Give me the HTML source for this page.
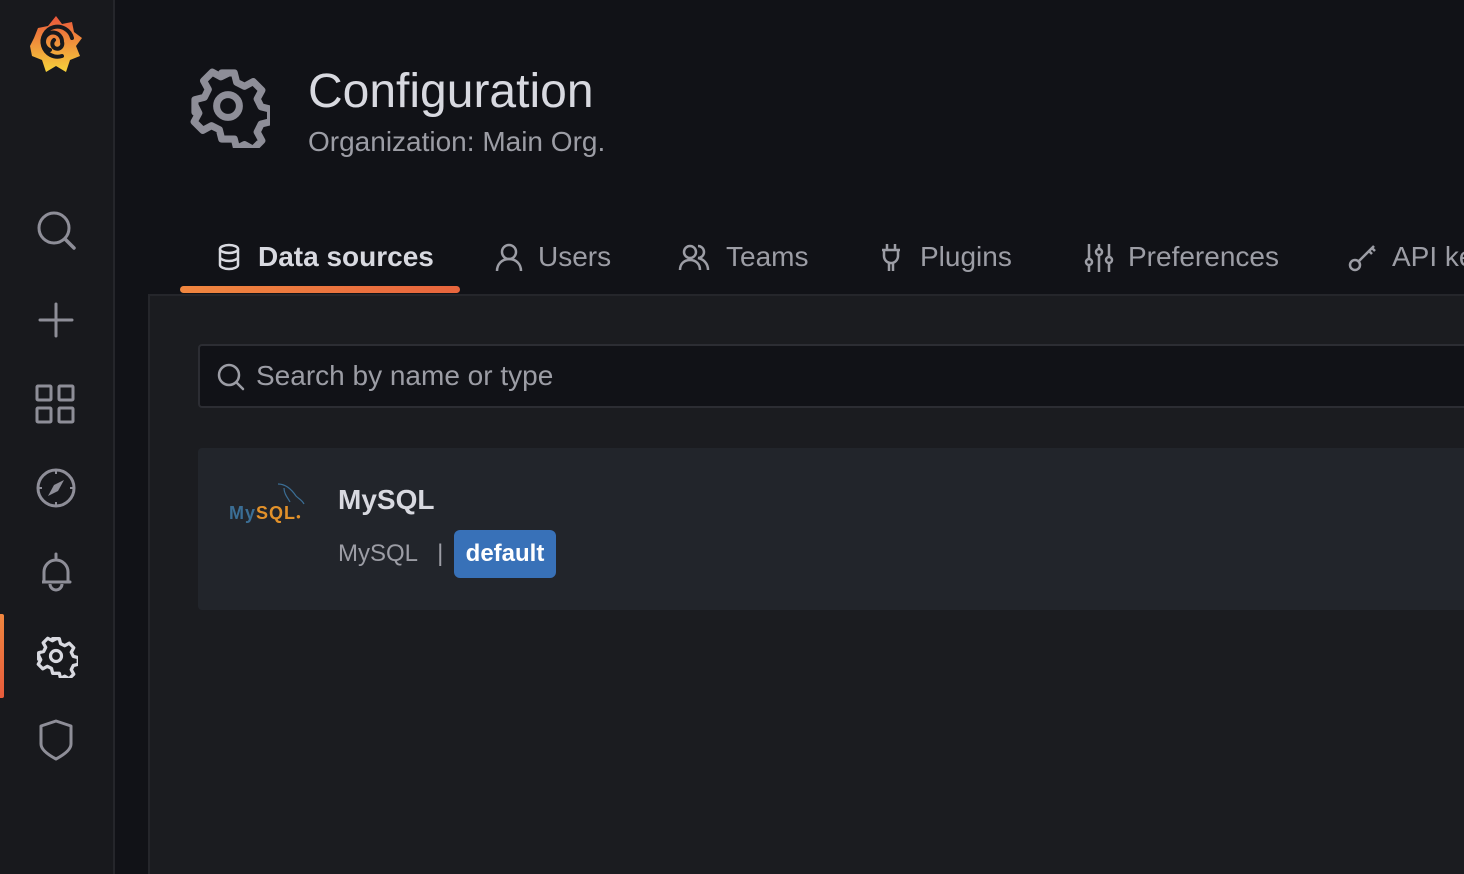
<!DOCTYPE html>
<html><head><meta charset="utf-8"><style>
*{margin:0;padding:0;box-sizing:border-box}
html{width:1464px;height:874px;overflow:hidden}
body{width:1464px;height:874px;overflow:hidden;background:#111217;font-family:"Liberation Sans",sans-serif;position:relative}
.side{position:absolute;left:0;top:0;width:115px;height:874px;background:#18191d;border-right:2px solid #25262b}
.ic{position:absolute;left:34px}
.main{position:absolute;left:148px;top:294px;width:1330px;height:580px;background:#1b1c20;border-left:2px solid #25262b;border-top:2px solid #25262b}
.tab{position:absolute;top:238px;font-size:28px;color:#9c9da5;display:flex;align-items:center;gap:14px;height:38px;white-space:nowrap}
svg{display:block}
</style></head><body>
<div class="side">
 <svg class="ic" style="left:28px;top:14px" width="56" height="60" viewBox="0 0 56 60">
  <defs><linearGradient id="g" x1="0" y1="0" x2="0" y2="1"><stop offset="0" stop-color="#e9553b"/><stop offset="1" stop-color="#f6d23b"/></linearGradient></defs>
  <path d="M28 2 L34 10 L44 8 L46 18 L54 24 L48 32 L52 42 L42 46 L38 58 L28 52 L18 58 L14 46 L4 42 L2 32 L6 24 L10 14 L20 12 Z" fill="url(#g)"/>
  <path d="M44 24 A15 15 0 1 0 34 42 M22 36 A9 9 0 1 1 34 28 A5 5 0 1 1 26 26" fill="none" stroke="#18191d" stroke-width="4" stroke-linecap="round"/>
 </svg>
 <svg class="ic" style="top:208px" width="44" height="44" viewBox="0 0 44 44"><circle cx="20" cy="20" r="15" fill="none" stroke="#8e8e98" stroke-width="3"/><path d="M31 31 L40 40" stroke="#8e8e98" stroke-width="3.5" stroke-linecap="round"/></svg>
 <svg class="ic" style="top:302px" width="44" height="36" viewBox="0 0 44 36"><path d="M22 2V34M6 18H38" stroke="#8e8e98" stroke-width="3" stroke-linecap="round"/></svg>
 <svg class="ic" style="top:382px" width="44" height="44" viewBox="0 0 44 44"><g fill="none" stroke="#8e8e98" stroke-width="3"><rect x="3" y="4" width="14" height="14" rx="1"/><rect x="25" y="4" width="14" height="14" rx="1"/><rect x="3" y="26" width="14" height="14" rx="1"/><rect x="25" y="26" width="14" height="14" rx="1"/></g></svg>
 <svg class="ic" style="top:466px" width="44" height="44" viewBox="0 0 44 44"><circle cx="22" cy="22" r="18" fill="none" stroke="#8e8e98" stroke-width="3"/><path d="M30 14 L24 25 L14 30 L20 19 Z" fill="#8e8e98"/><path d="M22 4v4M22 36v4M4 22h4M36 22h4" stroke="#8e8e98" stroke-width="2"/></svg>
 <svg class="ic" style="top:550px" width="44" height="44" viewBox="0 0 44 44"><path d="M22 4v4M10 32V22a12 12 0 0 1 24 0v10H8h28" fill="none" stroke="#8e8e98" stroke-width="3" stroke-linecap="round"/><path d="M16 34a6 6 0 0 0 12 0" fill="none" stroke="#8e8e98" stroke-width="3"/></svg>
 <div style="position:absolute;left:0;top:614px;width:4px;height:84px;background:linear-gradient(#f0863f,#e85c3c);border-radius:0 2px 2px 0"></div>
 <svg class="ic" style="top:634px" width="44" height="44" viewBox="0 0 48 48"><path d="M20 3h8l1.5 6 5 2.5 5.5-3 5.5 5.5-3 5.5 2.5 5 6 1.5v8l-6 1.5-2.5 5 3 5.5-5.5 5.5-5.5-3-5 2.5L28 45h-8l-1.5-6-5-2.5-5.5 3-5.5-5.5 3-5.5-2.5-5L3 28v-8l6-1.5 2.5-5-3-5.5 5.5-5.5 5.5 3 5-2.5Z" transform="translate(2.4 2.4) scale(.9)" fill="none" stroke="#d8d9e0" stroke-width="4" stroke-linejoin="round"/><circle cx="24" cy="24" r="6" fill="none" stroke="#d8d9e0" stroke-width="3.5"/></svg>
 <svg class="ic" style="top:718px" width="44" height="44" viewBox="0 0 44 44"><path d="M7 8 L22 3 L37 8 V26 Q37 33 22 41 Q7 33 7 26 Z" fill="none" stroke="#8e8e98" stroke-width="3" stroke-linejoin="round"/></svg>
</div>

<svg style="position:absolute;left:186px;top:64px" width="84" height="84" viewBox="0 0 48 48"><path d="M20 3h8l1.5 6 5 2.5 5.5-3 5.5 5.5-3 5.5 2.5 5 6 1.5v8l-6 1.5-2.5 5 3 5.5-5.5 5.5-5.5-3-5 2.5L28 45h-8l-1.5-6-5-2.5-5.5 3-5.5-5.5 3-5.5-2.5-5L3 28v-8l6-1.5 2.5-5-3-5.5 5.5-5.5 5.5 3 5-2.5Z" transform="translate(2.4 2.4) scale(.9)" fill="none" stroke="#8e8e98" stroke-width="4.5" stroke-linejoin="round"/><circle cx="24" cy="24" r="6.5" fill="none" stroke="#8e8e98" stroke-width="4"/></svg>
<div style="position:absolute;left:308px;top:64px;font-size:48px;color:#d8d9e0">Configuration</div>
<div style="position:absolute;left:308px;top:126px;font-size:28px;color:#9c9da5">Organization: Main Org.</div>

<div class="tab" style="left:214px;color:#d8d9e0;font-weight:bold"><svg width="30" height="30" viewBox="0 0 30 30"><g fill="none" stroke="#d8d9e0" stroke-width="2.5"><ellipse cx="15" cy="7" rx="9" ry="4"/><path d="M6 7v16c0 2 4 4 9 4s9-2 9-4V7M6 15c0 2 4 4 9 4s9-2 9-4"/></g></svg>Data sources</div>
<div style="position:absolute;left:180px;top:286px;width:280px;height:7px;border-radius:4px;background:linear-gradient(90deg,#f0863f,#e8653d)"></div>
<div class="tab" style="left:494px"><svg width="30" height="30" viewBox="0 0 30 30"><g fill="none" stroke="#9c9da5" stroke-width="2.5"><circle cx="15" cy="10" r="7"/><path d="M3 29c0-7 5-12 12-12s12 5 12 12"/></g></svg>Users</div>
<div class="tab" style="left:678px"><svg width="34" height="30" viewBox="0 0 34 30"><g fill="none" stroke="#9c9da5" stroke-width="2.5"><circle cx="12" cy="10" r="6"/><path d="M2 28c0-6 4-10 10-10s10 4 10 10M20 4a6 6 0 0 1 0 12c5 1 10 5 10 12"/></g></svg>Teams</div>
<div class="tab" style="left:876px"><svg width="30" height="30" viewBox="0 0 30 30"><g fill="none" stroke="#9c9da5" stroke-width="2.5"><path d="M11 2v6M19 2v6M6 8h18M8 8v6a7 7 0 0 0 14 0V8M13 21v8M17 21v8"/></g></svg>Plugins</div>
<div class="tab" style="left:1084px"><svg width="30" height="30" viewBox="0 0 30 30"><g fill="none" stroke="#9c9da5" stroke-width="2.5"><path d="M5 2v28M15 2v28M25 2v28"/><circle cx="5" cy="20" r="3" fill="#111217"/><circle cx="15" cy="10" r="3" fill="#111217"/><circle cx="25" cy="18" r="3" fill="#111217"/></g></svg>Preferences</div>
<div class="tab" style="left:1348px"><svg width="30" height="30" viewBox="0 0 30 30"><g fill="none" stroke="#9c9da5" stroke-width="2.5"><circle cx="7" cy="23" r="5"/><path d="M11 19L26 4M21 9l3 3M24 6l3 3"/></g></svg>API keys</div>

<div class="main"></div>
<div style="position:absolute;left:198px;top:344px;width:1300px;height:64px;background:#111217;border:2px solid #2c2d33;border-radius:4px"></div>
<svg style="position:absolute;left:216px;top:362px" width="30" height="30" viewBox="0 0 30 30"><circle cx="13" cy="13" r="10" fill="none" stroke="#9c9da5" stroke-width="2.5"/><path d="M21 21l6 6" stroke="#9c9da5" stroke-width="2.5" stroke-linecap="round"/></svg>
<div style="position:absolute;left:256px;top:360px;font-size:28px;color:#9c9da5">Search by name or type</div>

<div style="position:absolute;left:198px;top:448px;width:1300px;height:162px;background:#22252b;border-radius:4px"></div>
<div style="position:absolute;left:229px;top:503px;font-size:18px;font-weight:bold;letter-spacing:1px"><span style="color:#3b6e95">My</span><span style="color:#e2912a">SQL</span><span style="color:#e2912a;font-size:8px">●</span></div>
<svg style="position:absolute;left:274px;top:482px" width="34" height="24" viewBox="0 0 34 24"><path d="M4 2c8 0 14 6 18 12 3 3 6 4 8 8M10 6c0 6 4 10 6 14" fill="none" stroke="#3b6e95" stroke-width="1.2"/></svg>
<div style="position:absolute;left:338px;top:484px;font-size:28px;font-weight:bold;color:#d8d9e0">MySQL</div>
<div style="position:absolute;left:338px;top:540px;font-size:24px;color:#9c9da5">MySQL &nbsp;&nbsp;|</div>
<div style="position:absolute;left:454px;top:530px;width:102px;height:48px;background:#3871b8;border-radius:6px;color:#fff;font-size:24px;font-weight:bold;text-align:center;line-height:47px">default</div>
</body></html>
